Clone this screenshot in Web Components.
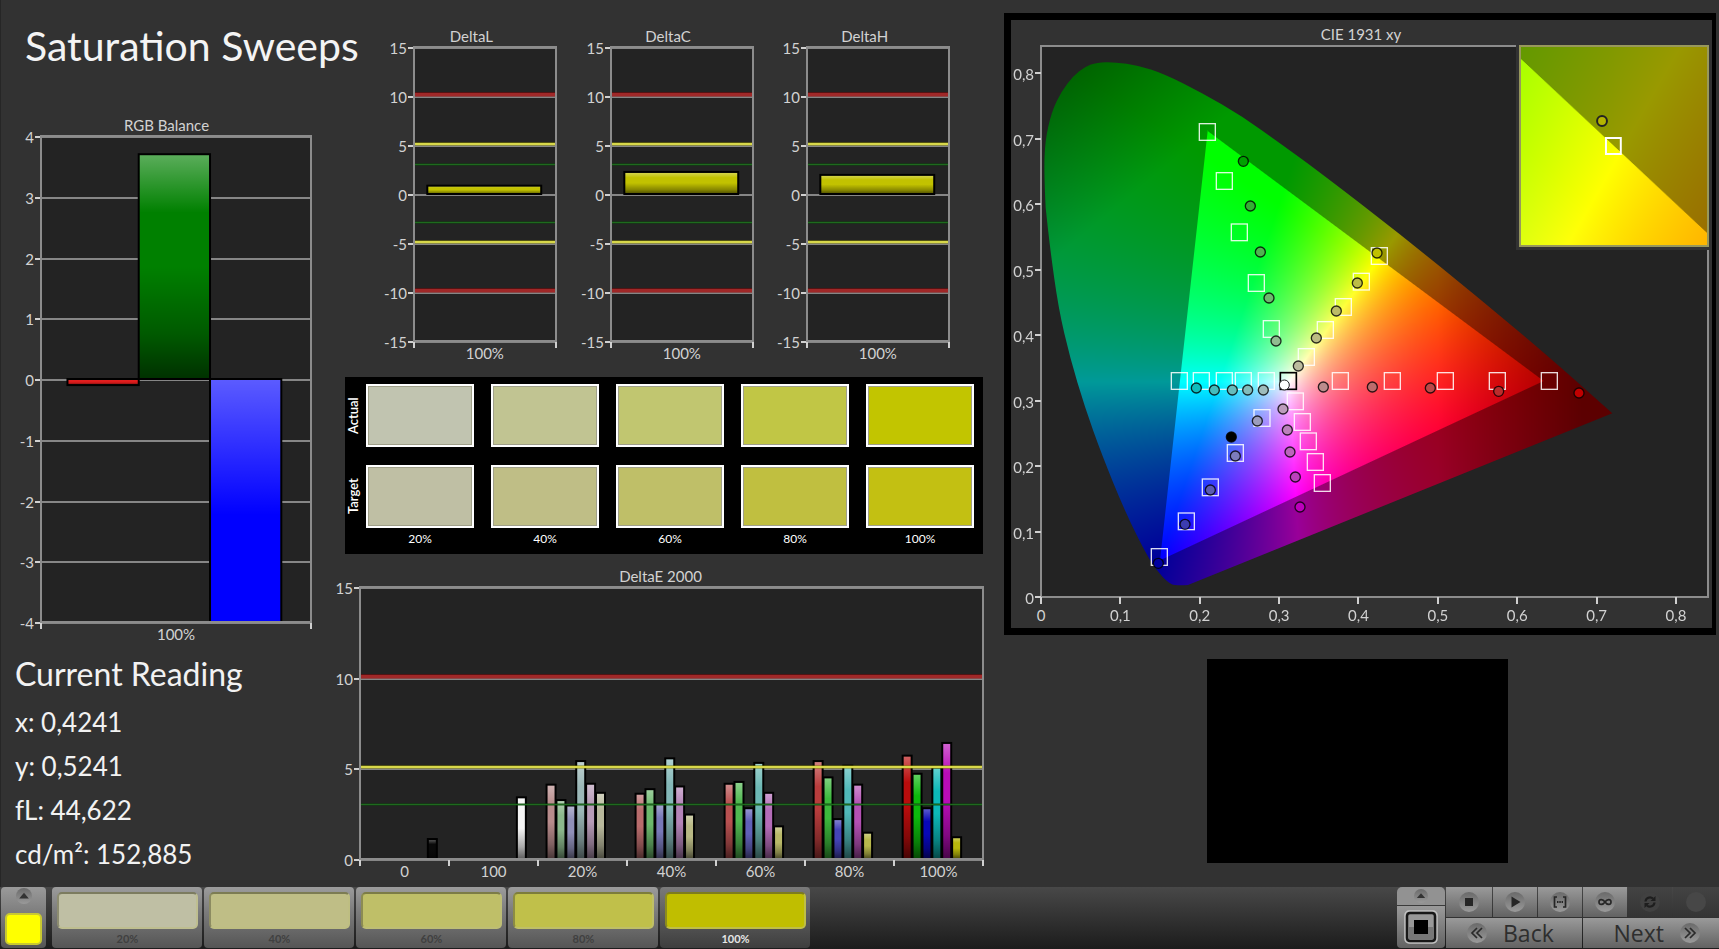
<!DOCTYPE html>
<html lang="en">
<head>
<meta charset="utf-8">
<title>Saturation Sweeps</title>
<style>
html,body{margin:0;background:#323232}
body{font-family:"Lato","Noto Sans",sans-serif}
</style>
</head>
<body>
<calibration-app></calibration-app>
<script>
const sheet = (css, html) => `<style>*{box-sizing:border-box}${css}</style>${html}`;
const BAR_SHADE = `<linearGradient id="shade" x1="0" y1="0" x2="0" y2="1">
  <stop offset="0" stop-color="#fff" stop-opacity=".36"/><stop offset=".26" stop-color="#fff" stop-opacity="0"/>
  <stop offset=".5" stop-color="#000" stop-opacity="0"/><stop offset=".8" stop-color="#000" stop-opacity=".3"/>
  <stop offset="1" stop-color="#000" stop-opacity=".62"/></linearGradient>
  <linearGradient id="fall" x1="0" y1="0" x2="0" y2="1">
  <stop offset="0" stop-color="#fff" stop-opacity=".36"/><stop offset=".28" stop-color="#fff" stop-opacity="0"/></linearGradient>`;

/* Bar chart: heading in the slot, everything else from its data property. */
class BarChart extends HTMLElement {
  constructor() {
    super();
    this.attachShadow({mode: 'open'}).innerHTML = sheet(`
      :host{display:block;padding-left:var(--axis,40px);color:#d2d2d2}
      .title{height:20px;line-height:19px;font-size:15px;text-align:center;margin-left:calc(0px - var(--shift,22px))}
      svg.plot{display:block;width:100%;height:var(--plot,200px);overflow:visible;background:#232323}
      text{font-size:var(--label,15px);fill:#d2d2d2}
      .foot{height:24px}`,
      `<div class="title"><slot></slot></div><svg class="plot" role="img"></svg><div class="foot"></div>`);
  }
  set data(d) {
    const y = v => (d.max - v) / (d.max - d.min) * 100;
    let s = `<defs>${BAR_SHADE}</defs>`;
    for (let v = d.min; v <= d.max; v += d.step) {
      s += `<rect x="0" width="100%" y="${y(v)}%" height="2" fill="#868686" shape-rendering="crispEdges"/>
        <rect x="-6" width="6" y="${y(v)}%" height="2" fill="#d0d0d0" shape-rendering="crispEdges"/>
        <text x="-7" y="${y(v)}%" dy="7" text-anchor="end">${v}</text>`;
    }
    s += `<svg width="100%" height="100%">`;
    for (const [x, w, v, c] of d.bars) {
      const top = Math.min(y(0), y(v)), h = Math.abs(y(v) - y(0));
      s += `<rect x="${x}%" y="${top}%" width="${w}%" height="${h}%" fill="${c}"/>
        <rect x="${x}%" y="${top}%" width="${w}%" height="${h}%" fill="url(#${v < d.min ? 'fall' : 'shade'})" stroke="#000" stroke-width="2"/>`;
    }
    s += `</svg>`;
    for (const [v, c, w, o] of d.limits || [])
      s += `<rect x="0" width="100%" y="${y(v)}%" height="${w + 2}" fill="${c}" opacity=".45" transform="translate(0 ${-w - 1})" shape-rendering="crispEdges"/>
        <rect x="0" width="100%" y="${y(v)}%" height="${w}" fill="${o}" transform="translate(0 ${-w})" shape-rendering="crispEdges"/>`;
    s += `<rect width="100%" height="100%" fill="none" stroke="#8c8c8c" stroke-width="2" shape-rendering="crispEdges"/>`;
    const n = d.groups.length;
    for (let i = 0; i <= n; i++)
      s += `<rect x="${i / n * 100}%" y="100%" width="2" height="6" fill="#d0d0d0" shape-rendering="crispEdges" transform="translate(-1 1)"/>`;
    d.groups.forEach((g, i) =>
      s += `<text x="${(i + .5) / n * 100}%" y="100%" dy="18" text-anchor="middle">${g}</text>`);
    this.shadowRoot.querySelector('.plot').innerHTML = s;
  }
}
customElements.define('bar-chart', BarChart);

/* Chromaticity diagram. Plot units: 3 per pixel at the design width. */
const LOCUS = [[32,500],[27,400],[30,300],[50,212],[80,150],[115,105],[150,77],[185,64],[240,63],[310,73],[390,100],[500,155],[620,225],[740,310],[860,398],[1100,583],[1330,770],[1560,962],[1732,1117],[459,1632],[420,1634],[400,1625],[375,1600],[340,1552],[270,1412],[200,1240],[150,1100],[105,950],[70,800],[45,620]];
const GAMUT = [[518,270],[1526,1020],[375,1558]];
const trace = pts => {
  let d = '';
  pts.forEach((p, i) => {
    const n = pts[(i + 1) % pts.length], m = [(p[0] + n[0]) / 2, (p[1] + n[1]) / 2];
    if (p[0] === 1732 || p[0] === 459) d += `L${p}`;
    else if (!i) d += `M${p}`;
    else d += `Q${p} ${n[0] === 1732 ? n : m}`;
  });
  return d + 'Z';
};
const chroma = (x, y) => {
  const X = x / y, Z = (1 - x - y) / y;
  const c = [3.2406*X - 1.5372 - .4986*Z, -.9689*X + 1.8758 + .0415*Z, .0557*X - .204 + 1.057*Z].map(v => Math.max(0, v));
  const m = Math.max(...c) || 1;
  const dim = Math.max(.6, 1 - 2.2*Math.max(0, x - .5)) * (1 - 1.35*Math.max(0, y - .5 - x));
  return c.map(v => v / m * 255 * dim);
};
const paint = (canvas, toXY, inside, covered) => {
  const g = canvas.getContext('2d'), w = canvas.width, h = canvas.height, im = g.createImageData(w, h);
  for (let j = 0; j < h; j++) for (let i = 0; i < w; i++) {
    const [x, y] = toXY(i + .5, j + .5), k = (j*w + i)*4;
    if (y <= 0) continue;
    const c = chroma(x, y), f = .6 + .4*inside(i + .5, j + .5);
    im.data[k] = c[0]*f; im.data[k+1] = c[1]*f; im.data[k+2] = c[2]*f; im.data[k+3] = 255;
  }
  g.putImageData(im, 0, 0);
  if (covered) { g.globalCompositeOperation = 'destination-in'; g.fill(covered); }
};
const SQUARES = [[517,273],[568,420],[613,574],[664,726],[709,864],[814,948],[871,867],[925,798],[979,722],[1033,645],[433,1020],[499,1020],[568,1020],[625,1020],[694,1020],[916,1020],[1072,1020],[1231,1020],[1387,1020],[1543,1020],[781,1081],[802,1143],[820,1201],[841,1263],[862,1326],[681,1131],[601,1236],[526,1339],[454,1441],[373,1548]];
const DOTS = [[625,361,'#00a000'],[646,495,'#34b034'],[676,633,'#50b450'],[702,771,'#6eb86e'],[723,900,'#90bc90'],[790,975,'#bcbc9e'],[844,891,'#bcbc82'],[904,810,'#bcbc66'],[967,726,'#bcbc46'],[1026,636,'#c0c000'],[484,1041,'#10bcbc'],[538,1047,'#44bcbc'],[592,1047,'#66bcbc'],[638,1047,'#82bcbc'],[685,1047,'#9ebcbc'],[865,1038,'#bc8c8c'],[1012,1038,'#bc6c6c'],[1186,1041,'#bc4848'],[1391,1051,'#bc2c2c'],[1632,1056,'#c00000'],[744,1104,'#bc9cbc'],[757,1167,'#bc80bc'],[765,1233,'#bc64bc'],[781,1308,'#bc40bc'],[795,1398,'#bc00bc'],[667,1140,'#9c9cbc'],[601,1245,'#7c7cbc'],[526,1347,'#5c5cb4'],[450,1450,'#3c3cb0'],[370,1567,'#0000a0'],[589,1188,'#000']];

class CieDiagram extends HTMLElement {
  constructor() {
    super();
    this.attachShadow({mode: 'open'}).innerHTML = sheet(`
      :host{display:block;border:7px solid #000;border-right-width:4px;padding:0 4px 0 30px;color:#d2d2d2;background:#323232}
      .title{height:26px;line-height:29px;font-size:15px;text-align:center;margin-left:-27px}
      .plot{position:relative;height:551px;background:#232323}
      canvas,svg{position:absolute;inset:0;width:100%;height:100%;display:block}
      svg.axes{overflow:visible}
      text{font-size:15px;fill:#d2d2d2}
      .inset{position:absolute;top:-1px;right:-1px;width:28.9%;height:205px;background:#323232;padding:0 0 3px 3px}
      .lens{position:relative;height:100%;border:2px solid #98985c}
      .foot{height:31px}`,
      `<div class="title"><slot></slot></div>
       <div class="plot"><canvas class="field" width="667" height="551"></canvas>
         <svg class="marks" viewBox="18 15 2001 1653" preserveAspectRatio="none"></svg>
         <svg class="axes" role="img"></svg>
         <div class="inset"><div class="lens"><canvas width="188" height="198"></canvas>
           <svg viewBox="0 0 188 198" preserveAspectRatio="none" fill="none"><circle cx="82" cy="74" r="5" fill="#b4b400" stroke="#222" stroke-width="2"/><rect x="86" y="91" width="15" height="16" stroke="#fff" stroke-width="2"/></svg></div></div>
       </div><div class="foot"></div>`);
    const r = this.shadowRoot;
    let a = `<rect width="100%" height="100%" fill="none" stroke="#8c8c8c" stroke-width="2" shape-rendering="crispEdges"/>`;
    for (let i = 0; i < 9; i++) {
      const t = i ? '0,' + i : '0', x = i * 11.9, y = 100 - i * 11.88;
      a += `<rect x="${x}%" y="100%" width="2" height="7" transform="translate(-1 0)" fill="#d0d0d0" shape-rendering="crispEdges"/><text x="${x}%" y="100%" dy="24" text-anchor="middle">${t}</text>
        <rect x="-6" y="${y}%" width="6" height="2" transform="translate(0 -1)" fill="#d0d0d0" shape-rendering="crispEdges"/><text x="-7" y="${y}%" dy="7" text-anchor="end">${t}</text>`;
    }
    r.querySelector('.axes').innerHTML = a;
    r.querySelector('.marks').innerHTML =
      SQUARES.map(([x, y]) => `<rect x="${x-24}" y="${y-25}" width="48" height="50" fill="none" stroke="#fff" stroke-width="4" stroke-opacity=".86"/>`).join('') +
      `<rect x="736" y="995" width="48" height="50" fill="none" stroke="#000" stroke-width="5"/>` +
      DOTS.map(([x, y, c]) => `<circle cx="${x}" cy="${y}" r="15" fill="${c}" stroke="#000" stroke-opacity=".8" stroke-width="4"/>`).join('') +
      `<circle cx="748" cy="1032" r="15" fill="#fff" stroke="#222" stroke-width="3"/>`;
    const map = p => [(p[0] - 18) / 3, (p[1] - 15) / 3];
    const shape = new Path2D();
    shape.addPath(new Path2D(trace(LOCUS)), new DOMMatrix([1/3, 0, 0, 1/3, -6, -5]));
    const tri = GAMUT.map(map);
    const inTri = (x, y) => {
      let m = 9;
      for (let i = 0; i < 3; i++) {
        const p = tri[i], q = tri[(i + 1) % 3], dx = q[0]-p[0], dy = q[1]-p[1];
        m = Math.min(m, (dx*(y-p[1]) - dy*(x-p[0])) / Math.hypot(dx, dy));
      }
      return Math.min(1, Math.max(0, m + .5));
    };
    paint(r.querySelector('.field'), (i, j) => [i / 794, (551 - j) / 655], inTri, shape);
    paint(r.querySelector('.lens canvas'), (i, j) => [.4261 + (i - 94) / 188 * .056, .5214 - (j - 99) / 198 * .056],
      (i, j) => Math.min(1, Math.max(0, (j - 12 - i * .925) + .5)));
  }
}
customElements.define('cie-diagram', CieDiagram);

/* Actual / target colour comparison */
class SwatchTable extends HTMLElement {
  constructor() {
    super();
    const row = (name, cs) => `<tr><th scope="row"><span>${name}</span></th>${cs.map(c => `<td><i style="background:${c}"></i></td>`).join('')}</tr>`;
    this.attachShadow({mode: 'open'}).innerHTML = sheet(`
      :host{display:block;background:#000;color:#fff;height:177px;padding:7px 9px 0 0}
      table{width:100%;border-collapse:collapse;table-layout:fixed}
      th,td{padding:0;font-weight:400}
      td{padding-left:17px;height:81px;vertical-align:top}
      td:nth-child(2){padding-left:0}
      col.first{width:108px} col.key{width:21px}
      th span{display:block;margin:0 0 18px;height:63px;width:16px;line-height:16px;writing-mode:vertical-rl;transform:rotate(180deg);font-size:13px;text-align:center;font-weight:600}
      i{display:block;height:63px;border:2px solid #fff;box-shadow:inset 0 0 0 1px #a0a08a}
      tfoot td{height:14px;font-size:12px;line-height:14px;text-align:center}
      tfoot tr{transform:translateY(-14px)}`,
      `<table><colgroup><col class="key"><col class="first"><col><col><col><col></colgroup>
       <tbody>${row('Actual', ['#c1c4b0','#c1c492','#c1c670','#c1c645','#c2c500'])}${row('Target', ['#bfbfa4','#bfbe86','#bfbf68','#c0bf40','#c3c012'])}</tbody>
       <tfoot><tr><td></td><td>20%</td><td>40%</td><td>60%</td><td>80%</td><td>100%</td></tr></tfoot></table>`);
  }
}
customElements.define('swatch-table', SwatchTable);

class CurrentReading extends HTMLElement {
  constructor() {
    super();
    this.attachShadow({mode: 'open'}).innerHTML = sheet(`
      :host{display:block;color:#f2f2f2;padding-left:14px}
      h2{margin:0;font-size:32px;line-height:52px;font-weight:400}
      p{margin:0;font-size:26px;line-height:44px}`,
      `<h2>Current Reading</h2><p>x: 0,4241</p><p>y: 0,5241</p><p>fL: 44,622</p><p>cd/m²: 152,885</p>`);
  }
}
customElements.define('current-reading', CurrentReading);

/* One saturation step in the bottom bar */
class StepTab extends HTMLElement {
  constructor() {
    super();
    this.attachShadow({mode: 'open'}).innerHTML = sheet(`
      :host{display:block;width:150px}
      button{display:block;width:100%;height:61px;border:0;border-radius:4px;padding:5px 4px 0 5px;font:700 11px/20px "Lato","Noto Sans",sans-serif;color:#404040;background:linear-gradient(#9c9c9c,#7c7c7c 40%,#555)}
      :host([selected]) button{color:#e6e6e6;background:linear-gradient(#7a7a7a,#5a5a5a 50%,#3e3e3e)}
      i{display:block;height:37px;border-radius:5px;background:var(--c);border:2px solid rgba(190,190,130,.55);border-top-color:rgba(80,80,50,.6);border-left-color:rgba(90,90,60,.5)}`,
      `<button type="button"><i></i><slot></slot></button>`);
  }
}
customElements.define('step-tab', StepTab);

class TransportBar extends HTMLElement {
  constructor() {
    super();
    const ico = (p, r = 10) => `<svg width="${2*r}" height="${2*r}" viewBox="-10 -10 20 20"><circle r="10" fill="url(#k)"/>${p}</svg>`;
    const up = `<path d="M-6 3L0-4L6 3Z" fill="#333"/>`;
    this.attachShadow({mode: 'open'}).innerHTML = sheet(`
      :host{display:flex;height:62px;align-items:flex-start;padding-left:1px;background:linear-gradient(#484848,#1c1c1c)}
      button{display:flex;align-items:center;justify-content:center;border:0;padding:0;background:linear-gradient(#9a9a9a,#626262);color:#2e2e2e;font:500 23px/30px "Open Sans","Noto Sans",sans-serif}
      svg{display:block}
      .defs{position:absolute}
      .now{width:45px;height:61px;flex-direction:column;justify-content:flex-start;padding-top:1px;border-radius:4px;background:linear-gradient(#9a9a9a,#555)}
      .now i{width:37px;height:32px;margin-top:9px;border-radius:5px;background:#ff0;border:2px solid #c8c832}
      .tabs{display:flex;gap:2px;margin-left:6px}
      .right{margin-left:auto;display:flex;gap:1px;height:61px}
      .win{width:48px;display:flex;flex-direction:column;gap:1px}
      .win button:first-child{height:18px;border-radius:5px 5px 0 0;background:#929292}
      .win button:last-child{flex:1;border-radius:0 0 4px 4px}
      .keys{display:grid;grid-template-columns:46px 44px 44px 44px 44px 46px;grid-template-rows:30px 30px;gap:1px}
      .keys .off{background:linear-gradient(#434343,#343434)}
      .wide{grid-column:span 3;gap:16px}
      .back{justify-content:flex-start;padding-left:21px}
      .next{justify-content:flex-end;padding-right:19px}`,
      `<svg class="defs" width="0" height="0"><defs><linearGradient id="k" x1="0" y1="0" x2="0" y2="1"><stop offset="0" stop-color="#6a6a6a"/><stop offset="1" stop-color="#9a9a9a"/></linearGradient></defs></svg>
       <button class="now" type="button" aria-label="Current colour">${ico(up, 8)}<i></i></button>
       <div class="tabs"><slot></slot></div>
       <div class="right">
        <div class="win"><button type="button" aria-label="Expand">${ico(up, 7)}</button>
         <button type="button" aria-label="Window"><svg width="34" height="34" viewBox="0 0 34 34"><rect x="1" y="1" width="32" height="32" rx="4" fill="#888" stroke="#c4c4c4" stroke-width="1.5"/><rect x="3" y="3" width="28" height="28" rx="3" fill="#999" stroke="#181818" stroke-width="2.5"/><path d="M5 17h24v12H5z" fill="#777"/><path d="M10 10h14v14H10z" fill="#000"/></svg></button></div>
        <div class="keys">
         <button type="button" aria-label="Stop">${ico('<path d="M-4-4h8v8h-8z" fill="#262626"/>')}</button>
         <button type="button" aria-label="Play">${ico('<path d="M-3.500-5.500L5.500 0L-3.500 5.500Z" fill="#262626"/>')}</button>
         <button type="button" aria-label="Range">${ico('<path d="M-3-5h-2.500v10h2.500M3-5h2.500v10h-2.500" fill="none" stroke="#262626" stroke-width="1.700"/><path d="M-3 0h6" stroke="#262626" stroke-width="1.800" stroke-dasharray="1.500 .8"/>')}</button>
         <button type="button" aria-label="Continuous">${ico('<path d="M0 0C-2-3-6-3.500-6 0S-2 3 0 0S6-3.500 6 0S2 3 0 0Z" fill="none" stroke="#262626" stroke-width="1.700"/>')}</button>
         <button type="button" class="off" aria-label="Refresh"><svg width="20" height="20" viewBox="-10 -10 20 20"><circle r="10" fill="#414141"/><path d="M-4.500-.5A4.500 4.500 0 0 1 3-3.500M4.500.5A4.500 4.500 0 0 1-3 3.500" fill="none" stroke="#1e1e1e" stroke-width="2.200"/><path d="M5.500-6v5h-5zM-5.500 6v-5h5z" fill="#1e1e1e"/></svg></button>
         <button type="button" class="off" aria-label="Record"><svg width="20" height="20" viewBox="-10 -10 20 20"><circle r="10" fill="#474747"/></svg></button>
         <button type="button" class="wide back">${ico('<path d="M0-5L-5 0L0 5M5-5L0 0L5 5" fill="none" stroke="#2a2a2a" stroke-width="1.700"/>')}<span>Back</span></button>
         <button type="button" class="wide next"><span>Next</span>${ico('<path d="M0-5L5 0L0 5M-5-5L0 0L-5 5" fill="none" stroke="#2a2a2a" stroke-width="1.700"/>')}</button>
        </div></div>`);
  }
}
customElements.define('transport-bar', TransportBar);

class CalibrationApp extends HTMLElement {
  constructor() {
    super();
    this.attachShadow({mode: 'open'}).innerHTML = sheet(`
      :host{display:flex;flex-direction:column;min-height:100vh;background:#323232}
      main{flex:1;display:grid;grid-template-columns:minmax(0,331fr) minmax(0,652fr) minmax(0,712fr);padding-right:3px;border-left:1px solid #262626}
      h1{margin:0;padding:20px 0 0 24px;height:116px;font-size:41px;line-height:52px;font-weight:400;color:#f4f4f4;white-space:nowrap}
      .rgb{--axis:40px;--plot:486px;--shift:19px;margin-right:21px}
      current-reading{margin-top:2px}
      .trio{display:grid;grid-template-columns:repeat(3,minmax(0,1fr));padding:27px 35px 0 27px}
      .trio bar-chart{--axis:55px;--plot:294px;--shift:27px}
      swatch-table{margin:12px 1px 0 13px}
      .de{--axis:28px;--plot:272px;--shift:22px;margin:13px 1px 0 0}
      .mid{margin-right:20px}
      main{grid-template-columns:minmax(0,331fr) minmax(0,672fr) minmax(0,712fr)}
      cie-diagram{margin-top:13px}
      .patch{height:204px;width:42.3%;margin:24px 0 0 28.5%;background:#000}`,
      `<main><section><h1>Saturation Sweeps</h1><bar-chart class="rgb">RGB Balance</bar-chart><current-reading></current-reading></section>
       <section class="mid"><div class="trio"><bar-chart id="l">DeltaL</bar-chart><bar-chart id="c">DeltaC</bar-chart><bar-chart id="h">DeltaH</bar-chart></div>
        <swatch-table></swatch-table><bar-chart class="de">DeltaE 2000</bar-chart></section>
       <section><cie-diagram>CIE 1931 xy</cie-diagram><div class="patch"></div></section></main>
       <transport-bar><step-tab style="--c:#bfbfa4">20%</step-tab><step-tab style="--c:#bfbe86">40%</step-tab><step-tab style="--c:#bfbf68">60%</step-tab><step-tab style="--c:#c0c04a">80%</step-tab><step-tab selected style="--c:#c0be00">100%</step-tab></transport-bar>`);
    const $ = s => this.shadowRoot.querySelector(s);
    $('.rgb').data = {min: -4, max: 4, step: 1, groups: ['100%'],
      bars: [[-.1, '#e01c1c'], [3.7, '#008000'], [-8, '#0000ff']].map(([v, c], i) => [9.8 + i * 26.4, 26.4, v, c])};
    const limits = [[3, '#0a4a0a', 1, '#1e6a1e'], [5, '#8a8a00', 2, '#d8d84a'], [10, '#900000', 3, '#a02828']];
    const both = limits.concat(limits.map(([v, ...rest]) => [-v, ...rest]));
    for (const [id, v] of [['l', .85], ['c', 2.25], ['h', 1.95]])
      $('#' + id).data = {min: -15, max: 15, step: 5, groups: ['100%'], limits: both, bars: [[9.4, 80.4, v, '#c2c200']]};
    const colours = [['#b88c8c','#8cb88c','#9090b8','#9cb8b8','#b89cb8','#b8b89c'],['#b86c6c','#6cb86c','#7878b8','#84b8b8','#b484b8','#b8b884'],['#b85050','#50b850','#6060b8','#6cb8b4','#b46cb8','#b8b868'],['#b83c3c','#3cb83c','#4444b8','#50b8b8','#b450b4','#b8b84c'],['#b80c0c','#0cb80c','#0808b8','#0cb8b8','#b80cb8','#b8b80c']];
    const values = [[4.1,3.25,2.95,5.4,4.15,3.65],[3.6,3.85,3.05,5.55,4,2.45],[4.15,4.25,2.8,5.3,3.65,1.8],[5.4,4.5,2.2,5.15,4.1,1.45],[5.7,4.7,2.8,5.05,6.4,1.2]];
    const at = (g, s) => (g * 89.1 + 8.5 + s * 9.9) / 623.5 * 100, w = 9 / 623.5 * 100;
    const bars = [[at(0, 6), w, 1.1, '#0a0a0a'], [at(1, 6), w, 3.4, '#f4f4f4']];
    values.forEach((row, g) => row.forEach((v, s) => bars.push([at(g + 2, s), w, v, colours[g][s]])));
    $('.de').data = {min: 0, max: 15, step: 5, groups: ['0', '100', '20%', '40%', '60%', '80%', '100%'], limits, bars};
  }
}
customElements.define('calibration-app', CalibrationApp);
</script>
</body>
</html>
